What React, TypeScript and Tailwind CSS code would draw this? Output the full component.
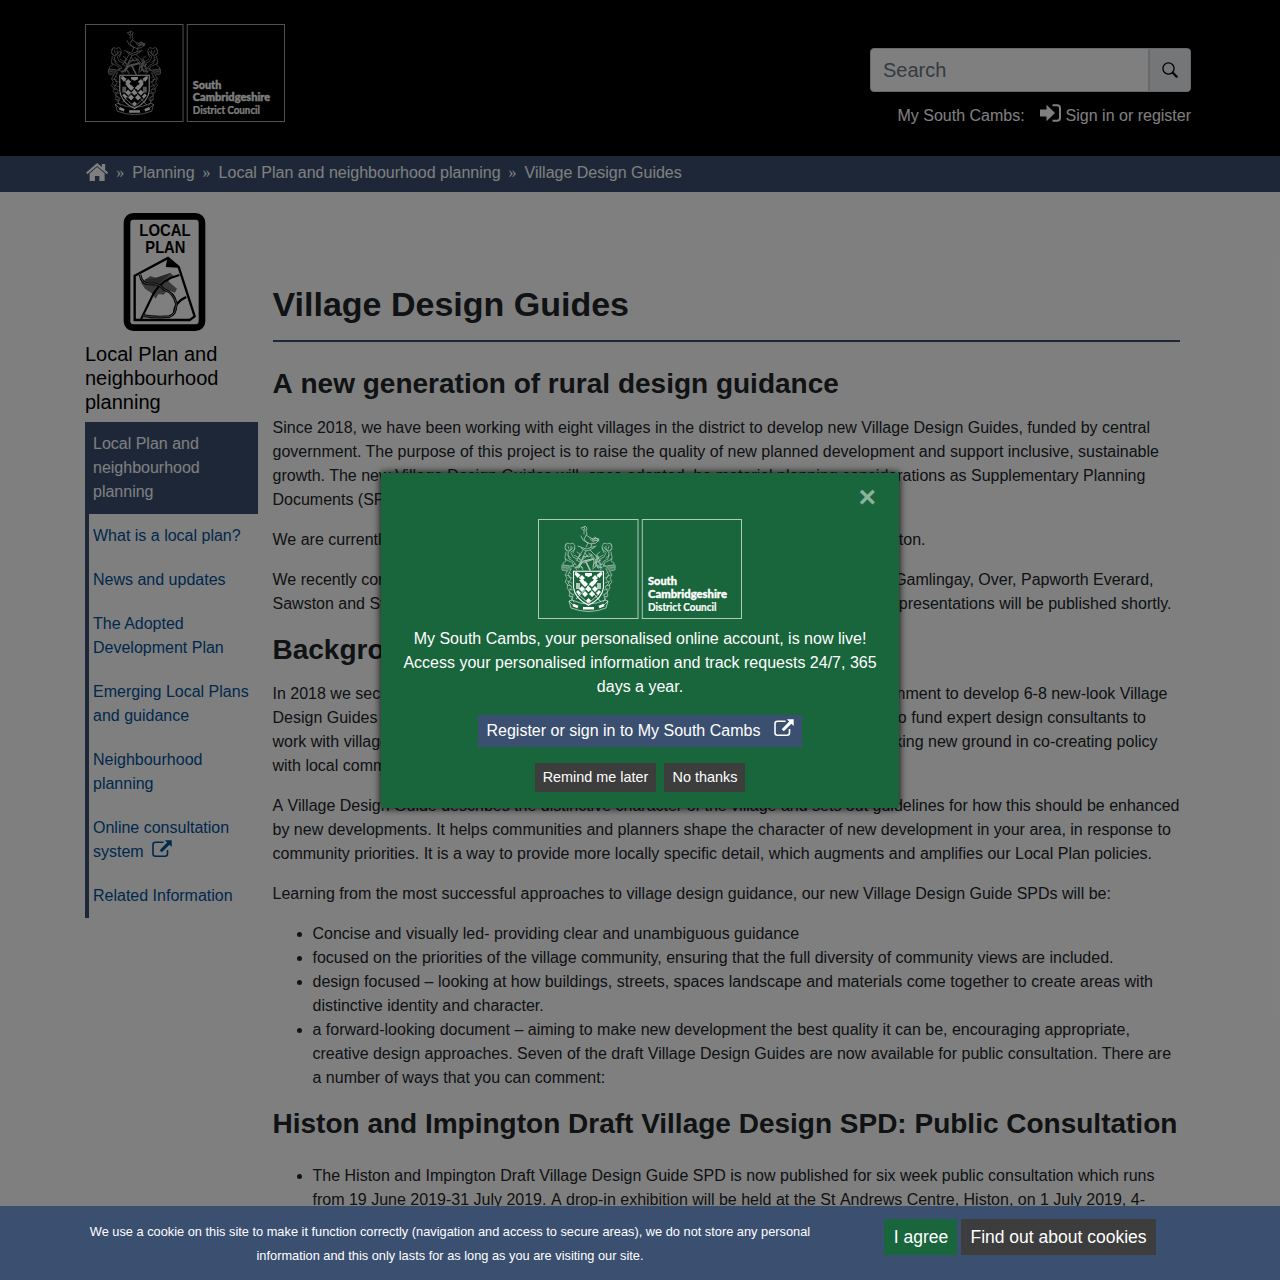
import React from "react";

function CouncilLogo({ className }: { className: string }) {
  const half = (
    <g fill="none" stroke="currentColor" strokeWidth="0.75" strokeLinecap="round" strokeLinejoin="round">
      {/* supporter: head, mane, limbs */}
      <path d="M27 27l2-3 3 1 3-1 2 3-1 4-3 2M28 25l-1 4 2 3M30 27l1 3M33 27v3l-3 4M37 29l-2 5" />
      <path d="M28 33l-1 5 1 4-3 2v3h8l4-2M30 34l1 6 4 2 3 4M33 34l2 4 4 2M36 36l5 3 2 4M24 48l6 1 5-2M25 50h8M24 46v5l5 1" />
      <path d="M30 51l-3 5 2 3-2 4 3 3-1 3 3 4-1 4 3 1M33 50l-3 6 3 4-3 4 4 4-3 5 4 3-1 5M31 58l3 1M29 62l5 2M31 70l4 1M28 56l4 1M33 74l3 2M33 79l3 4" />
      <path d="M39 33l3 2-2 4 4 2-1 4-5 3M43 36l-3 3M38 41l6 3-3 5M42 47l-5 2" />
      <path d="M39 51l-2-3 4 1 1-3 3 3" />
      <path d="M27 30l3 2 3-1 2-3M29 36l4 3M27 40l6 3M26 46l5 1M34 43l2 5M31 53l2 2M29 66l4 1M32 77l3 1" />
    </g>
  );
  return (
    <svg viewBox="0 0 204 100" preserveAspectRatio="none" className={className} aria-label="South Cambridgeshire District Council">
      <g fill="none" stroke="currentColor" strokeWidth="1" opacity="0.65">
        <rect x="0.5" y="0.5" width="99.5" height="99" />
        <rect x="104.3" y="0.5" width="99.2" height="99" />
      </g>
      <g opacity="0.62">
        {half}
        <g transform="translate(101 0) scale(-1 1)">{half}</g>
        {/* crest: bird on a wreath above the helm */}
        <g fill="none" stroke="currentColor" strokeWidth="0.85" strokeLinecap="round" strokeLinejoin="round">
          <path d="M43 9l3-1 1-1 2 2-1 3 1 3-3 5 2 3 5 2 5-1 3-3-3-2-3 1-4-2-3-2M44 10l2 1v4M43 17l2 4 5 3M52 20l4 3M56 19l5 1M50 24l-2 4M54 24l-1 4M40 27l8 3 10-3M43 29l5 3 4-1 5-3" />
          <path d="M54 20l6 2M55 22l5-1M57 18l4 4M46 8l1 3" />
          <path d="M45 31l-3 5-3 5M48 32l-4 8M52 31l4 4 5 5 2 7M51 34l5 8-1 8M50 36l-7 6-3 6M46 44l10-4M48 43l4 8M42 46l3 5M57 43l-2 4M53 35l6 8-2 5M45 38l5-1M58 38l4 8M47 34l3 4 4-2M46 37l-2 4" />
          <path d="M41 46l5-4 9-2M48 43l4 8" strokeWidth="1.600" />
        </g>
      </g>
      {/* shield with a chequered saltire */}
      <path d="M35.500 52.300h30v16q-1 11-15 18q-14-7-15-18z" fill="none" stroke="currentColor" strokeWidth="1.1" />
      <g fill="currentColor">
        <path d="M36.500 55l2-2 4 3-3 3zM44 56l3 3-3 3-3-3zM41 61l3-2 3 4-3 2zM47 62l3 3-3 3-3-3zM64.500 55l-2-2-4 3 3 3zM57 56l-3 3 3 3 3-3zM60 61l-3-2-3 4 3 2zM54 62l-3 3 3 3 3-3z" />
        <path d="M44 67l3 3-3 3-3-3zM57 67l3 3-3 3-3-3zM50.500 67l3 3-3 3-3-3zM40 71l3 3-2 2-3-3zM61 71l-3 3 2 2 3-3zM47 72l3 3-3 3-3-3zM54 72l-3 3 3 3 3-3zM50.500 79l2.500 2.500-2.500 2.500-2.500-2.500z" />
        <path d="M47 54h7v2.500l-3.500 1.500-3.500-1.500z" />
        <g opacity="0.65">
          <rect x="38" y="64" width="4" height="6" />
          <rect x="59" y="64" width="4" height="6" />
        </g>
      </g>
      <path d="M37 53l26 30M64 53L38 80M40 75l10 9M61 75l-10 9" stroke="currentColor" strokeWidth="0.7" fill="none" />
      {/* motto ribbon */}
      <path d="M31 82l3-1q16 8 33 0l3 1-2 7q-17 7-35 0zM31 82l4 4M70 82l-4 4" fill="none" stroke="currentColor" strokeWidth="0.8" opacity="0.75" />
      <path d="M35 86l5 2M45 89.300h11M61 88l5-2" stroke="currentColor" strokeWidth="2.600" fill="none" />
      <g fill="currentColor" stroke="currentColor" fontFamily="Lato, sans-serif" fontSize="11.300">
        <text x="110" y="66" fontWeight="900" strokeWidth="0.35" textLength="29" lengthAdjust="spacingAndGlyphs">South</text>
        <text x="110" y="78.800" fontWeight="900" strokeWidth="0.35" textLength="79" lengthAdjust="spacingAndGlyphs">Cambridgeshire</text>
        <text x="110" y="91.600" fontWeight="700" strokeWidth="0.2" textLength="68.500" lengthAdjust="spacingAndGlyphs">District Council</text>
      </g>
    </svg>
  );
}

function LocalPlanSign() {
  return (
    <svg viewBox="38 20 249 360" className="ml-[38px] block h-[120px] w-[83px]">
      <rect x="50" y="33" width="225" height="334" rx="19" fill="none" stroke="#000" strokeWidth="20" />
      <g fontFamily="'Liberation Sans', sans-serif" fontWeight="700" fontSize="50" fill="#000">
        <text x="87" y="93" textLength="154" lengthAdjust="spacingAndGlyphs">LOCAL</text>
        <text x="105" y="143" textLength="120" lengthAdjust="spacingAndGlyphs">PLAN</text>
      </g>
      <path d="M92 232l28-20 18 6 42-16 10 10-16 16 26 22-6 12-22-8-12 14-16-2-8 14-12-16-20-14z" fill="#747474" />
      <path d="M104 222l30-4 46-14-28 26-22 14-22-8z" fill="#505050" />
      <path d="M73 211l100-53 32 27 48 148-15 11H73z" fill="none" stroke="#000" strokeWidth="7" />
      <path d="M171 160l33 27-38-2z" />
      <path d="M92 342L130 264Q155 222 207 209M228 275Q190 292 191 326" fill="none" stroke="#000" strokeWidth="6.500" />
      <path d="M89 208Q94 236 118 236Q146 232 160 252Q192 262 198 296Q196 330 176 334Q140 338 98 331" fill="none" stroke="#000" strokeWidth="8" />
      <path d="M89 208Q94 236 118 236Q146 232 160 252Q192 262 198 296Q196 330 176 334Q140 338 98 331" fill="none" stroke="#ccc" strokeWidth="2" />
    </svg>
  );
}

function ExternalIcon({ className }: { className: string }) {
  return (
    <svg viewBox="0 0 20 18" className={className}>
      <path d="M11.500 2.200H3.500Q1 2.200 1 4.700v9Q1 16.200 3.500 16.200h9.500q2.500 0 2.500-2.500V10" fill="none" stroke="currentColor" strokeWidth="1.600" />
      <path d="M12.800 0.300H19.700V7l-2.300-2.200-7.600 7.500-2.100-2.100 7.500-7.600z" fill="currentColor" />
    </svg>
  );
}

function Sep() {
  return <span className="w-6 text-center font-['Liberation_Serif',serif]">»</span>;
}

// A line whose middle part lies behind the dialog.
function SplitLine({ left, right, width }: { left: string; right: string; width: string }) {
  return (
    <span className={"flex justify-between whitespace-nowrap " + width}>
      <span>{left}</span>
      <span>{right}</span>
    </span>
  );
}

const navItems = ["What is a local plan?", "News and updates", "The Adopted Development Plan", "Emerging Local Plans and guidance", "Neighbourhood planning"];

export default function App() {
  return (
    <div className="relative h-[1280px] w-[1280px] overflow-hidden bg-white font-['Liberation_Sans',Arial,sans-serif] text-base leading-6 text-[#212529]">
      <header className="h-[156px] bg-black text-white">
        <div className="flex justify-between pt-6 pr-[89px] pl-[85px]">
          <CouncilLogo className="h-[98px] w-[200px]" />
          <div className="flex flex-col items-end pt-6">
            <div className="flex h-11 w-[321px] overflow-hidden rounded border border-[#ced4da] bg-white">
              <span className="flex-1 pl-3 text-xl leading-[42px] text-[#6c757d]">Search</span>
              <span className="flex w-[42px] items-center justify-center border-l-2 border-[#ced4da] bg-[#e9ecef] pb-px text-black">
                <svg viewBox="0 0 16 16" className="h-4 w-4" fill="none" stroke="currentColor">
                  <circle cx="6.500" cy="6.500" r="5.600" strokeWidth="1.300" />
                  <path d="M10.800 10.800l3.800 3.800" strokeWidth="2.300" strokeLinecap="round" />
                </svg>
              </span>
            </div>
            <div className="mt-3 flex">
              <span>My South Cambs:</span>
              <svg viewBox="0 0 21 18" className="mr-[4.500px] ml-[15.500px] h-[18px] w-[21px]">
                <path d="M0 5.500h6.500V0.800L15 9l-8.500 8.200V12.500H0z" fill="currentColor" />
                <path d="M12.500 1.200H17q3 0 3 3v9.600q0 3-3 3h-4.500" fill="none" stroke="currentColor" strokeWidth="2" />
              </svg>
              <span>Sign in or register</span>
            </div>
          </div>
        </div>
      </header>

      <nav className="flex h-9 bg-[#3b4f71] pt-[5px] pl-[86px] text-white">
        <svg viewBox="0 0 22 18" className="mt-[2px] h-[18px] w-[22.300px]" fill="currentColor">
          <path d="M11 0l4.700 4V1H19v6l3 2.600-1.200 1.700L11 3 1.200 11.300 0 9.600z" />
          <path d="M11 4l7.500 6.400V18h-5.300v-5h-4.400v5H3.500v-7.600z" />
        </svg>
        <Sep />
        <span>Planning</span>
        <Sep />
        <span>Local Plan and neighbourhood planning</span>
        <Sep />
        <span>Village Design Guides</span>
      </nav>

      <div className="flex gap-[14.500px] pl-[85px]">
        <aside className="w-[173px] pt-5">
          <LocalPlanSign />
          <h3 className="mt-2.5 mb-2 text-xl leading-6 text-black">Local Plan and neighbourhood planning</h3>
          <ul className="border-l-4 border-[#3b4f71] text-[#00509b]">
            <li className="bg-[#3b4f71] py-2.5 pr-8 pl-1 text-white">Local Plan and neighbourhood planning</li>
            {navItems.map((t) => (
              <li key={t} className="py-2.5 pl-1">{t}</li>
            ))}
            <li className="py-2.5 pl-1">
              Online consultation system
              <ExternalIcon className="ml-[8.500px] inline-block h-[18px] w-5 align-[-1px]" />
            </li>
            <li className="py-2.5 pl-1">Related Information</li>
          </ul>
        </aside>

        <main className="w-[909px] pt-[92px]">
          <h1 className="mb-[25px] h-[58px] w-[907px] border-b-2 border-[#3b4f71] text-[34px] leading-[41px] font-bold">Village Design Guides</h1>
          <h2 className="mb-[15px] text-[28px] leading-[34px] font-bold">A&nbsp;new generation of rural design guidance</h2>
          <p className="mb-4 whitespace-nowrap">
            Since 2018, we have been working with eight villages in the district to develop new Village Design Guides, funded by central<br />
            government. The purpose of this project is to raise the quality of new planned development and support inclusive, sustainable<br />
            growth. The new Village Design Guides will, once adopted, be material planning considerations as Supplementary Planning<br />
            Documents (SPDs).
          </p>
          <p className="mb-4">
            <SplitLine width="w-[653px]" left="We are currently consulting on" right="Swaston." />
          </p>
          <p className="mb-[17px]">
            <SplitLine width="w-[881px]" left="We recently consulted on" right="Gamlingay, Over, Papworth Everard," />
            <SplitLine width="w-[899px]" left="Sawston and Swavesey." right="representations will be published shortly." />
          </p>
          <h2 className="mb-[15px] text-[28px] leading-[34px] font-bold">Background</h2>
          <p className="mb-4">
            <SplitLine width="w-[895px]" left="In 2018 we secured funding" right="Government to develop 6-8 new-look Village" />
            <SplitLine width="w-[873.500px]" left="Design Guides for" right="to fund expert design consultants to" />
            <SplitLine width="w-[885px]" left="work with villages" right="breaking new ground in co-creating policy" />
            <span>with local communities.</span>
          </p>
          <p className="mb-4 whitespace-nowrap">
            A&nbsp;Village Design Guide describes the distinctive character of the village and sets out guidelines for how this should be enhanced<br />
            by new developments. It helps communities and planners shape the character of new development in your area, in response to<br />
            community priorities. It is a way to provide more locally specific detail, which augments and amplifies our Local Plan policies.
          </p>
          <p className="mb-4">Learning from the most successful approaches to village design guidance, our new Village Design Guide SPDs will be:</p>
          <ul className="mb-[17px] list-disc pl-10 whitespace-nowrap">
            <li>Concise and visually led- providing clear and unambiguous guidance</li>
            <li>focused on the priorities of the village community, ensuring that the full diversity of community views are included.</li>
            <li>design focused – looking at how buildings, streets, spaces landscape and materials come together to create areas with<br />distinctive identity and character.</li>
            <li>a forward-looking document – aiming to make new development the best quality it can be, encouraging appropriate,<br />creative design approaches. Seven of the draft Village Design Guides are now available for public consultation. There are<br />a number of ways that you can comment:</li>
          </ul>
          <h2 className="mb-[23px] text-[28px] leading-[34px] font-bold whitespace-nowrap">Histon and Impington Draft Village Design SPD: Public Consultation</h2>
          <ul className="list-disc pl-10 whitespace-nowrap">
            <li>The Histon and Impington Draft Village Design Guide SPD is now published for six week public consultation which runs<br />from 19 June 2019-31 July 2019.&nbsp;A&nbsp;drop-in exhibition will be held at the St&nbsp;Andrews Centre, Histon, on 1&nbsp;July 2019, 4-</li>
          </ul>
        </main>
      </div>

      <div className="absolute inset-0 flex items-center justify-center bg-black/50">
        <section className="relative mt-px flex h-[335px] w-[518px] flex-col items-center bg-[#19653c] pt-[46px] text-white shadow-[0_0_8px_#000]">
          <button className="absolute top-[13px] right-[23px] h-[22px] text-[30px] leading-[22px] font-bold text-white/50">×</button>
          <CouncilLogo className="h-[100px] w-[204px]" />
          <p className="mt-2 text-center">
            My South Cambs, your personalised online account, is now live!<br />
            Access your personalised information and track requests 24/7, 365<br />
            days a year.
          </p>
          <button className="mt-4 flex h-8 w-[324px] bg-[#3b4f71] pl-[8.500px] leading-8">
            Register or sign in to My South Cambs
            <ExternalIcon className="mt-1 ml-[13.500px] h-[18px] w-5" />
          </button>
          <div className="mt-4 flex gap-2 text-[14.400px] leading-[29px]">
            <button className="w-[121px] bg-[#3d3d3d]">Remind me later</button>
            <button className="w-[81px] bg-[#3d3d3d] pl-px">No thanks</button>
          </div>
        </section>
      </div>

      <footer className="absolute inset-x-0 bottom-0 flex h-[74px] bg-[#3b4f71] pt-[13px] pl-[75px] text-white">
        <p className="mt-px w-[750px] text-center text-[12.800px] whitespace-nowrap">
          We use a cookie on this site to make it function correctly (navigation and access to secure areas), we do not store any personal<br />
          information and this only lasts for as long as you are visiting our site.
        </p>
        <div className="ml-[59px] flex h-9 gap-1 text-[17.500px] leading-9">
          <button className="w-[73px] bg-[#19653c] pl-px">I agree</button>
          <button className="w-[195px] bg-[#3d3d3d]">Find out about cookies</button>
        </div>
      </footer>
    </div>
  );
}
